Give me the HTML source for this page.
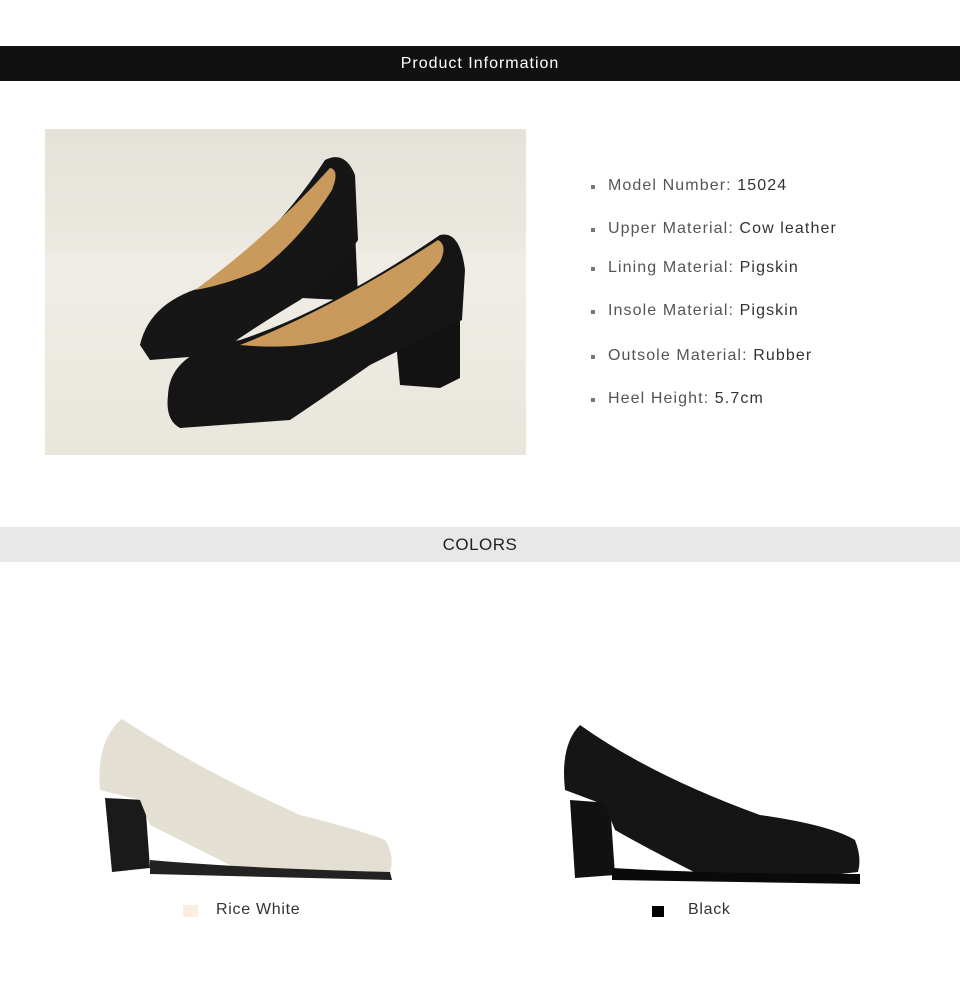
<!DOCTYPE html>
<html><head><meta charset="utf-8"><style>
body{margin:0;width:960px;height:994px;background:#fff;position:relative;overflow:hidden;font-family:"Liberation Sans",sans-serif}
.bar1{position:absolute;left:0;top:46px;width:960px;height:35px;background:#111;color:#fff;font-size:16px;text-align:center;line-height:35px;letter-spacing:1px}
.bar2{position:absolute;left:0;top:527px;width:960px;height:35px;background:#e8e8e8;color:#222;font-size:17px;text-align:center;line-height:35px;letter-spacing:.5px}
.spec{position:absolute;left:591px;font-size:16px;color:#555;letter-spacing:1.1px}
.spec:before{content:"";position:absolute;left:0;top:8px;width:4px;height:4px;background:#777}
.spec span{margin-left:17px}
.spec b{font-weight:normal;color:#333}
.lab{position:absolute;top:901px;font-size:16px;color:#333;letter-spacing:.7px}
</style></head><body>
<div class="bar1">Product Information</div>
<svg style="position:absolute;left:0;top:0" width="960" height="994">
<defs><linearGradient id="bg" x1="0" y1="0" x2="0" y2="1"><stop offset="0" stop-color="#e5e2da"/><stop offset=".35" stop-color="#ebe8e0"/><stop offset=".4" stop-color="#efede6"/><stop offset="1" stop-color="#e9e6dc"/></linearGradient></defs>
<rect x="45" y="129" width="481" height="326" fill="url(#bg)"/>
<path d="M300 235 L355 232 L358 295 L340 300 L302 298 Z" fill="#141414"/>
<path d="M140 345 Q150 300 210 285 Q280 230 325 160 Q345 150 355 175 L358 240 Q340 270 300 300 Q250 330 215 355 L150 360 Z" fill="#161616"/>
<path d="M195 290 Q270 235 330 168 Q340 170 332 190 Q300 240 260 270 Q225 285 195 290Z" fill="#c99a5c"/>
<path d="M395 330 L460 315 L460 378 L440 388 L400 385 Z" fill="#121212"/>
<path d="M168 395 Q170 350 240 340 Q330 310 440 235 Q460 230 465 270 L462 320 Q420 340 370 365 Q320 400 290 420 L180 428 Q165 420 168 395Z" fill="#151515"/>
<path d="M240 345 Q330 310 438 240 Q448 245 440 262 Q390 320 330 340 Q290 350 240 345Z" fill="#c99a5c"/>
<path d="M105 798 L145 800 L150 868 L112 872 Z" fill="#1a1a1a"/>
<path d="M100 790 Q96 740 122 719 Q200 770 300 815 Q360 830 385 840 Q395 855 390 872 L330 878 L240 870 Q190 845 150 825 L140 800 Z" fill="#e4dfd3"/>
<path d="M150 860 Q240 868 390 872 L392 880 L150 874Z" fill="#222"/>
<path d="M570 800 L610 803 L615 875 L575 878 Z" fill="#111"/>
<path d="M565 790 Q560 745 580 725 Q650 775 760 815 Q830 825 855 840 Q862 858 858 872 L790 880 L700 875 Q650 850 615 830 L605 805 Z" fill="#151515"/>
<path d="M612 868 Q720 874 860 874 L860 884 L612 880Z" fill="#0a0a0a"/>
<rect x="183" y="905" width="15" height="12" fill="#fbeee0"/>
<rect x="652" y="906" width="12" height="11" fill="#000"/>
</svg>
<div class="spec" style="top:177px"><span>Model Number: <b>15024</b></span></div>
<div class="spec" style="top:220px"><span>Upper Material: <b>Cow leather</b></span></div>
<div class="spec" style="top:259px"><span>Lining Material: <b>Pigskin</b></span></div>
<div class="spec" style="top:302px"><span>Insole Material: <b>Pigskin</b></span></div>
<div class="spec" style="top:347px"><span>Outsole Material: <b>Rubber</b></span></div>
<div class="spec" style="top:390px"><span>Heel Height: <b>5.7cm</b></span></div>
<div class="bar2">COLORS</div>
<div class="lab" style="left:216px">Rice White</div>
<div class="lab" style="left:688px">Black</div>
</body></html>
